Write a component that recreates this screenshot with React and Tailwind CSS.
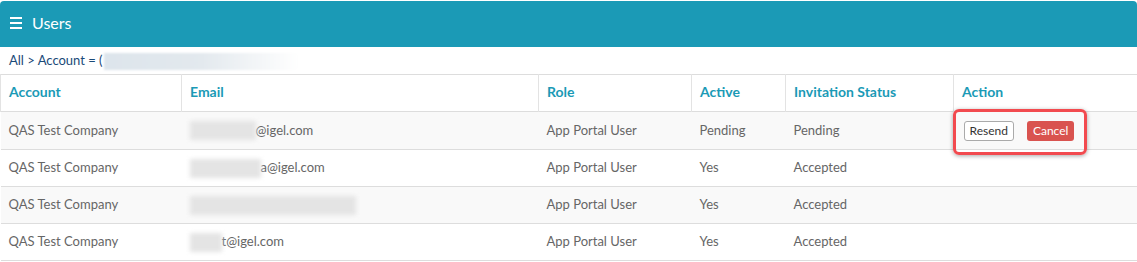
import React from "react";

const rows = [
  { pre: "w-[66px]", tail: "@igel.com", active: "Pending", status: "Pending", action: true, h: "h-[38px]" },
  { pre: "w-[71px]", tail: "a@igel.com", active: "Yes", status: "Accepted", h: "h-[37px]" },
  { pre: "w-[166px]", tail: "", active: "Yes", status: "Accepted", h: "h-[37px]" },
  { pre: "w-[32px]", tail: "t@igel.com", active: "Yes", status: "Accepted", h: "h-[37px]" },
];

export default function App() {
  return (
    <div className="w-[1137px] h-[262px] bg-white pt-px" style={{ fontFamily: "Lato, 'Open Sans', sans-serif" }}>
      <div className="h-[46px] bg-[#1b9ab6] rounded-t-[4px] flex items-center pl-[10px]">
        <div className="flex flex-col gap-[2.5px] w-[12px] -mt-[2px]">
          <div className="h-[2.5px] bg-white" />
          <div className="h-[2.5px] bg-white" />
          <div className="h-[2.5px] bg-white" />
        </div>
        <span className="ml-[10px] text-white text-[16px] leading-none -mt-[2px]">Users</span>
      </div>
      <div className="h-[27px] flex items-center pl-[9px] text-[13px] text-[#1a4a78] pt-[1px]">
        <span>All &gt; Account = (</span>
        <div className="ml-[1px] w-[195px] h-[17px] bg-gradient-to-r from-[#dde5ec] via-[#e3e9ee] to-white blur-[1px]" />
      </div>
      <div className="relative">
        <table className="w-full border-collapse text-[13px] text-[#666]">
          <colgroup>
            <col className="w-[181px]" />
            <col className="w-[357px]" />
            <col className="w-[153px]" />
            <col className="w-[94px]" />
            <col className="w-[168px]" />
            <col />
          </colgroup>
          <thead>
            <tr className="h-[37px] border-y border-[#ddd]">
              {["Account", "Email", "Role", "Active", "Invitation Status", "Action"].map((h) => (
                <th key={h} className="text-left font-bold text-[14px] text-[#1b9ab6] px-[8px] pb-[3px] border-l border-[#e3e3e3]">
                  {h}
                </th>
              ))}
            </tr>
          </thead>
          <tbody>
            {rows.map((r, i) => (
              <tr key={i} className={`${r.h} border-b border-[#ddd] ${i % 2 === 0 ? "bg-[#f9f9f9]" : "bg-white"}`}>
                <td className="px-[8px]">QAS Test Company</td>
                <td className="px-[8px]">
                  <div className="flex items-center">
                    <div className={`${r.pre} h-[19px] bg-[#e4e4e4] blur-[2px]`} />
                    <span>{r.tail}</span>
                  </div>
                </td>
                <td className="px-[8px]">App Portal User</td>
                <td className="px-[8px]">{r.active}</td>
                <td className="px-[8px]">{r.status}</td>
                <td className="px-[10px]">
                  {r.action && (
                    <div className="flex items-center gap-[13px]">
                      <button className="h-[20px] px-[5px] text-[12px] text-[#333] bg-white border border-[#aaa] rounded-[3px] leading-none">Resend</button>
                      <button className="h-[20px] px-[6px] text-[12px] text-white bg-[#d9534f] rounded-[3px] leading-none">Cancel</button>
                    </div>
                  )}
                </td>
              </tr>
            ))}
          </tbody>
        </table>
        <div className="absolute left-[953px] top-[35px] w-[134px] h-[46px] border-[3px] border-[#f24a4f] rounded-[6px] shadow-[0_1px_4px_rgba(0,0,0,0.35)]" />
      </div>
    </div>
  );
}
